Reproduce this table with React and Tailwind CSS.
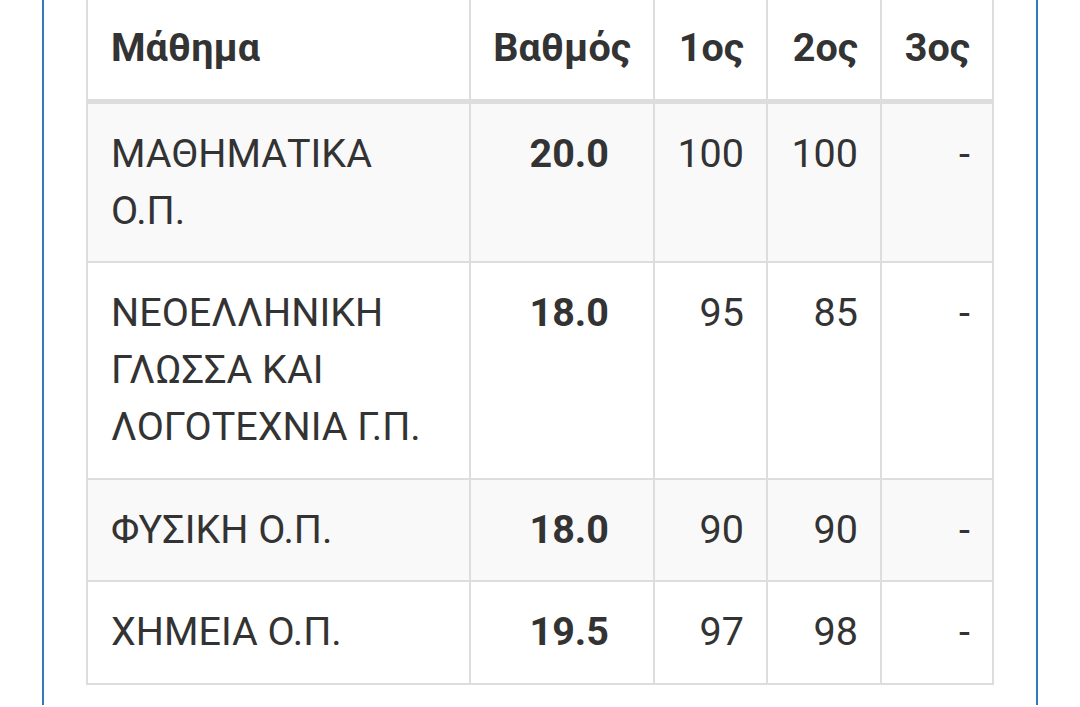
import React from "react";

const rows = [
  { name: ["ΜΑΘΗΜΑΤΙΚΑ", "Ο.Π."], grade: "20.0", a: "100", b: "100", c: "-", striped: true },
  { name: ["ΝΕΟΕΛΛΗΝΙΚΗ", "ΓΛΩΣΣΑ ΚΑΙ", "ΛΟΓΟΤΕΧΝΙΑ Γ.Π."], grade: "18.0", a: "95", b: "85", c: "-", striped: false },
  { name: ["ΦΥΣΙΚΗ Ο.Π."], grade: "18.0", a: "90", b: "90", c: "-", striped: true },
  { name: ["ΧΗΜΕΙΑ Ο.Π."], grade: "19.5", a: "97", b: "98", c: "-", striped: false },
];

export default function App() {
  return (
    <div className="h-[707px] overflow-hidden bg-white px-[42px] font-['Roboto','Liberation_Sans',sans-serif] text-[#333]">
      <div className="h-full border-x-2 border-[#337ab7] px-[42px]">
        <div className="mt-[-2px] grid grid-cols-[383px_184px_113px_114px_112px] border-l-2 border-[#ddd] text-[39.5px] leading-[56.75px]">
          <div className="border-r-2 border-b-[5px] border-[#ddd] pl-[23px] pr-[22px] py-[22px] font-bold">Μάθημα</div>
          <div className="border-r-2 border-b-[5px] border-[#ddd] px-[22px] py-[22px] text-right font-bold">Βαθμός</div>
          <div className="border-r-2 border-b-[5px] border-[#ddd] px-[22px] py-[22px] text-right font-bold">1ος</div>
          <div className="border-r-2 border-b-[5px] border-[#ddd] px-[22px] py-[22px] text-right font-bold">2ος</div>
          <div className="border-r-2 border-b-[5px] border-[#ddd] px-[22px] py-[22px] text-right font-bold">3ος</div>
          {rows.map((r, i) => {
            const bg = r.striped ? "bg-[#f9f9f9]" : "bg-white";
            return (
              <React.Fragment key={i}>
                <div className={`border-r-2 border-b-2 border-[#ddd] pl-[23px] pr-[22px] py-[22px] ${bg}`}>
                  {r.name.map((l, j) => (
                    <div key={j}>{l}</div>
                  ))}
                </div>
                <div className={`border-r-2 border-b-2 border-[#ddd] pl-[22px] pr-[44px] py-[22px] text-right font-bold ${bg}`}>{r.grade}</div>
                <div className={`border-r-2 border-b-2 border-[#ddd] px-[22px] py-[22px] text-right ${bg}`}>{r.a}</div>
                <div className={`border-r-2 border-b-2 border-[#ddd] px-[22px] py-[22px] text-right ${bg}`}>{r.b}</div>
                <div className={`border-r-2 border-b-2 border-[#ddd] px-[22px] py-[22px] text-right ${bg}`}>{r.c}</div>
              </React.Fragment>
            );
          })}
        </div>
      </div>
    </div>
  );
}
